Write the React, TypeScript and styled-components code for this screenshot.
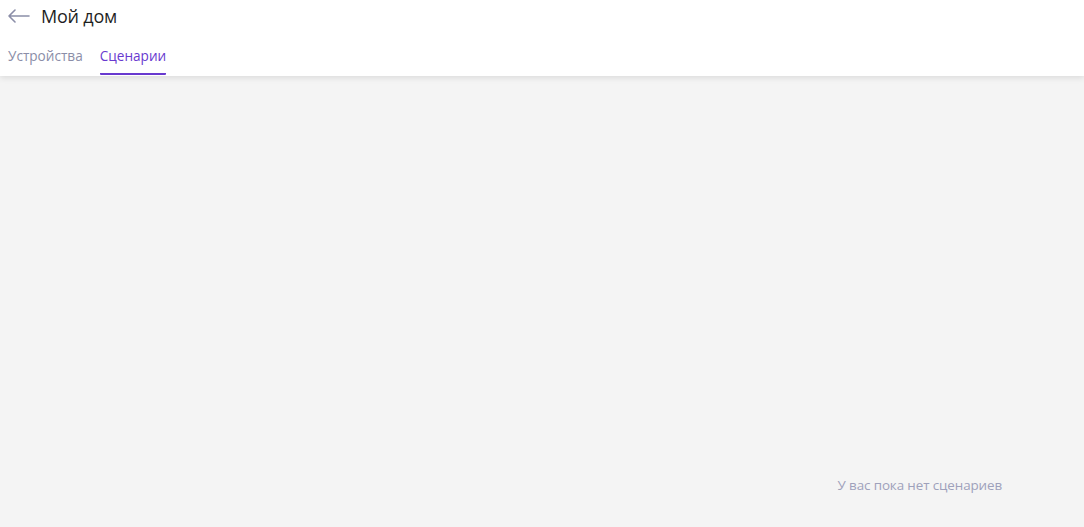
import React from "react";
import styled, { createGlobalStyle } from "styled-components";

const Global = createGlobalStyle`
  html, body { margin: 0; padding: 0; height: 100%; }
  body { font-family: "Open Sans", "Noto Sans", sans-serif; background: #f4f4f4; }
  #root { min-height: 100vh; }
`;

const Page = styled.div`
  display: flex;
  flex-direction: column;
  min-height: 100vh;
  background: #f4f4f4;
`;

const Header = styled.header`
  background: #fff;
  box-shadow: 0 2px 6px rgba(0, 0, 0, 0.1);
  display: flex;
  flex-direction: column;
  height: 76px;
  box-sizing: border-box;
  position: relative;
  z-index: 1;
`;

const TitleRow = styled.div`
  display: flex;
  align-items: center;
  height: 32px;
  padding-left: 8px;
  gap: 11px;
`;

const BackButton = styled.button`
  border: 0;
  background: none;
  padding: 0;
  width: 22px;
  height: 16px;
  display: flex;
  align-items: center;
  cursor: pointer;
`;

const Title = styled.h1`
  margin: 0;
  font-size: 18px;
  font-weight: 400;
  color: #1f1f1f;
  letter-spacing: -0.2px;
`;

const Tabs = styled.nav`
  display: flex;
  gap: 17px;
  padding-left: 8px;
  margin-top: 12px;
`;

const Tab = styled.div<{ $active?: boolean }>`
  font-size: 13.6px;
  letter-spacing: 0;
  color: ${(p) => (p.$active ? "#6839cf" : "#8b8ea8")};
  padding-top: 2px;
  padding-bottom: 8px;
  border-bottom: 2px solid ${(p) => (p.$active ? "#6839cf" : "transparent")};
  border-radius: 1px;
  cursor: pointer;
`;

const Content = styled.main`
  flex: 1;
  display: flex;
  align-items: flex-end;
  justify-content: flex-end;
  padding: 0 82px 33px 0;
`;

const Empty = styled.div`
  font-size: 13.4px;
  letter-spacing: -0.1px;
  color: #9ea1bb;
`;

export default function App() {
  return (
    <>
      <Global />
      <Page>
        <Header>
          <TitleRow>
            <BackButton aria-label="Назад">
              <svg width="22" height="14" viewBox="0 0 22 14" fill="none">
                <path d="M1 7H21M1 7L7 1M1 7L7 13" stroke="#8b8ea8" strokeWidth="1.6" strokeLinecap="round" strokeLinejoin="round" />
              </svg>
            </BackButton>
            <Title>Мой дом</Title>
          </TitleRow>
          <Tabs>
            <Tab>Устройства</Tab>
            <Tab $active>Сценарии</Tab>
          </Tabs>
        </Header>
        <Content>
          <Empty>У вас пока нет сценариев</Empty>
        </Content>
      </Page>
    </>
  );
}
